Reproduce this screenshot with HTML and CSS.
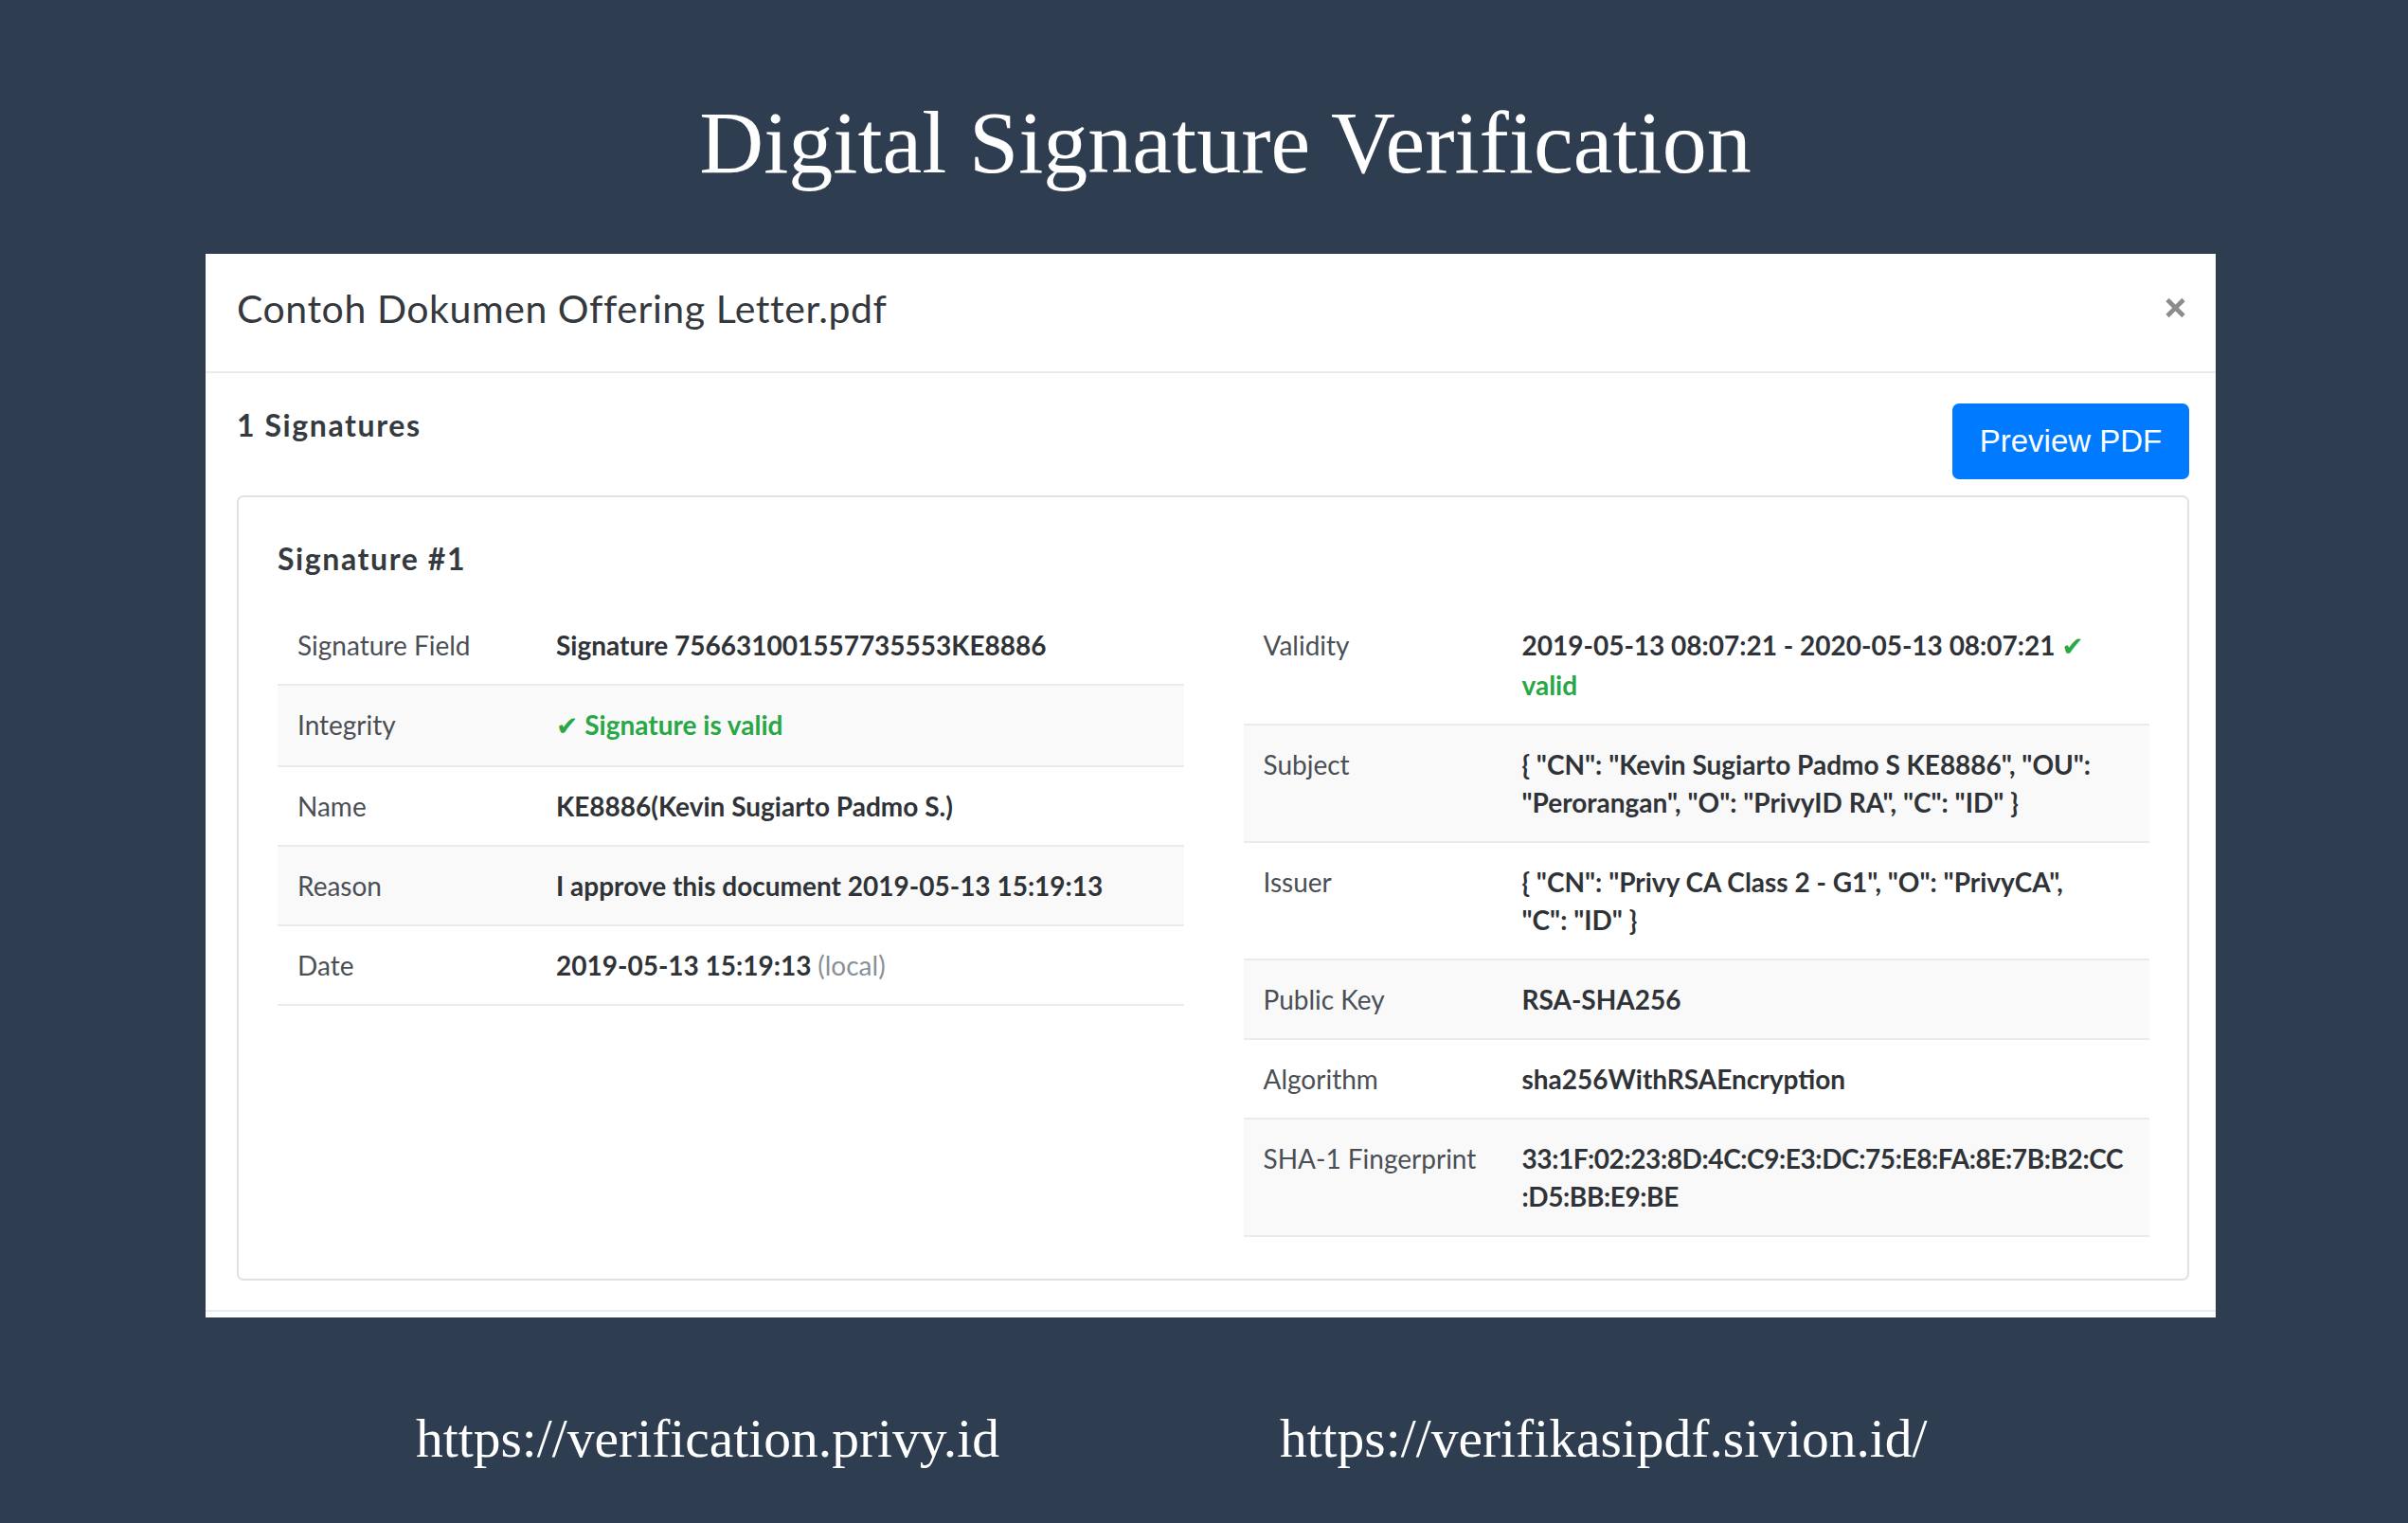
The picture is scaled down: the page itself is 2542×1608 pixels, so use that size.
FILE: index.html
```html
<!DOCTYPE html>
<html lang="en">
<head>
<meta charset="utf-8">
<title>Digital Signature Verification</title>
<link rel="stylesheet" href="styles.css">
</head>
<body>
  <h1 class="page-title">Digital Signature Verification</h1>

  <div class="modal">
    <div class="modal-header">
      <h5 class="modal-title">Contoh Dokumen Offering Letter.pdf</h5>
      <button class="close" aria-label="Close">
        <svg width="21" height="22" viewBox="0 0 21 22"><path d="M2 2.5 L19 19.5 M19 2.5 L2 19.5" stroke="#8c8c8c" stroke-width="4.6" fill="none"/></svg>
      </button>
    </div>

    <div class="modal-body">
      <div class="sig-head">
        <h6 class="sig-count">1 Signatures</h6>
        <button class="btn-preview">Preview PDF</button>
      </div>

      <div class="card">
        <h5 class="card-title">Signature #1</h5>
        <div class="cols">
          <table class="info">
            <tr><td class="lbl">Signature Field</td><td class="val">Signature 756631001557735553KE8886</td></tr>
            <tr><td class="lbl">Integrity</td><td class="val ok"><span class="chk">✔</span> Signature is valid</td></tr>
            <tr><td class="lbl">Name</td><td class="val">KE8886(Kevin Sugiarto Padmo S.)</td></tr>
            <tr><td class="lbl">Reason</td><td class="val">I approve this document 2019-05-13 15:19:13</td></tr>
            <tr><td class="lbl">Date</td><td class="val">2019-05-13 15:19:13 <span class="muted">(local)</span></td></tr>
          </table>

          <table class="info">
            <tr><td class="lbl">Validity</td><td class="val">2019-05-13 08:07:21 - 2020-05-13 08:07:21 <span class="ok"><span class="chk">✔</span><br>valid</span></td></tr>
            <tr><td class="lbl">Subject</td><td class="val">{ "CN": "Kevin Sugiarto Padmo S KE8886", "OU":<br>"Perorangan", "O": "PrivyID RA", "C": "ID" }</td></tr>
            <tr><td class="lbl">Issuer</td><td class="val">{ "CN": "Privy CA Class 2 - G1", "O": "PrivyCA",<br>"C": "ID" }</td></tr>
            <tr><td class="lbl">Public Key</td><td class="val">RSA-SHA256</td></tr>
            <tr><td class="lbl">Algorithm</td><td class="val">sha256WithRSAEncryption</td></tr>
            <tr><td class="lbl">SHA-1 Fingerprint</td><td class="val hex">33:1F:02:23:8D:4C:C9:E3:DC:75:E8:FA:8E:7B:B2:CC<br>:D5:BB:E9:BE</td></tr>
          </table>
        </div>
      </div>
    </div>
    <div class="modal-footer"></div>
  </div>

  <div class="links">
    <span class="link">https://verification.privy.id</span>
    <span class="link">https://verifikasipdf.sivion.id/</span>
  </div>
</body>
</html>
```

FILE: styles.css
```css
* { box-sizing: border-box; }

html, body {
  margin: 0;
  padding: 0;
}

body {
  background: #2e3e50;
  width: 2542px;
  height: 1608px;
  overflow: hidden;
  font-family: "Lato", "Noto Sans", sans-serif;
}

.page-title {
  margin: 97px 0 0 0;
  padding-left: 45px;
  text-align: center;
  font-family: "Liberation Serif", "Times New Roman", serif;
  font-weight: 400;
  font-size: 94px;
  line-height: 107px;
  color: #ffffff;
}

.modal {
  margin: 64px 0 0 217px;
  width: 2122px;
  background: #ffffff;
}

.modal-header {
  display: flex;
  align-items: center;
  justify-content: space-between;
  height: 126px;
  padding: 0 32px 8px 33px;
  border-bottom: 2px solid #e9ecef;
}

.modal-title {
  margin: 0;
  font-size: 41px;
  font-weight: 400;
  letter-spacing: 0.55px;
  line-height: 48px;
  color: #35393e;
}

.close {
  border: 0;
  padding: 0;
  background: transparent;
  width: 21px;
  height: 22px;
  margin-top: -2px;
  display: block;
}

.close svg { display: block; }

.modal-body {
  padding: 32px 28px 31px 33px;
}

.sig-head {
  display: flex;
  justify-content: space-between;
  align-items: flex-start;
  margin-bottom: 17px;
}

.sig-count {
  margin: 4px 0 0 0;
  font-size: 32px;
  letter-spacing: 1.6px;
  line-height: 37px;
  font-weight: 700;
  color: #343a40;
}

.btn-preview {
  border: 0;
  border-radius: 7px;
  background: #007bff;
  color: #ffffff;
  font-family: "Liberation Sans", Arial, sans-serif;
  font-size: 33px;
  line-height: 48px;
  padding: 16px 28px;
  width: 250px;
}

.card {
  border: 2px solid #e2e2e2;
  border-radius: 7px;
  padding: 46px 40px 44px 41px;
}

.card-title {
  margin: 0 0 32px 0;
  font-size: 32px;
  letter-spacing: 1.6px;
  line-height: 37px;
  font-weight: 700;
  color: #343a40;
}

.cols {
  display: grid;
  grid-template-columns: 1fr 1fr;
  column-gap: 63px;
  align-items: start;
}

.info {
  width: 100%;
  border-collapse: collapse;
  table-layout: fixed;
  font-size: 28px;
  line-height: 40px;
}

.info td {
  padding: 21px 21px;
  border-bottom: 2px solid #e9ecef;
  vertical-align: top;
}

.info tr:nth-child(even) td {
  background: #f9f9f9;
}

.lbl {
  width: 273px;
  color: #4a4f55;
  font-weight: 400;
}

.val {
  color: #2f3337;
  font-weight: 700;
}

.ok { color: #28a745; }

.chk {
  font-family: "DejaVu Sans", sans-serif;
  font-size: 28px;
}

.muted {
  color: #8a9096;
  font-weight: 400;
}

.hex {
  white-space: nowrap;
  letter-spacing: -0.4px;
}

.modal-footer {
  height: 8px;
  border-top: 2px solid #e9ecef;
}

.links {
  display: flex;
  gap: 296px;
  margin-top: 95px;
  padding-left: 439px;
}

.link {
  font-family: "Liberation Serif", "Times New Roman", serif;
  font-size: 57.5px;
  line-height: 66px;
  color: #ffffff;
}
```
